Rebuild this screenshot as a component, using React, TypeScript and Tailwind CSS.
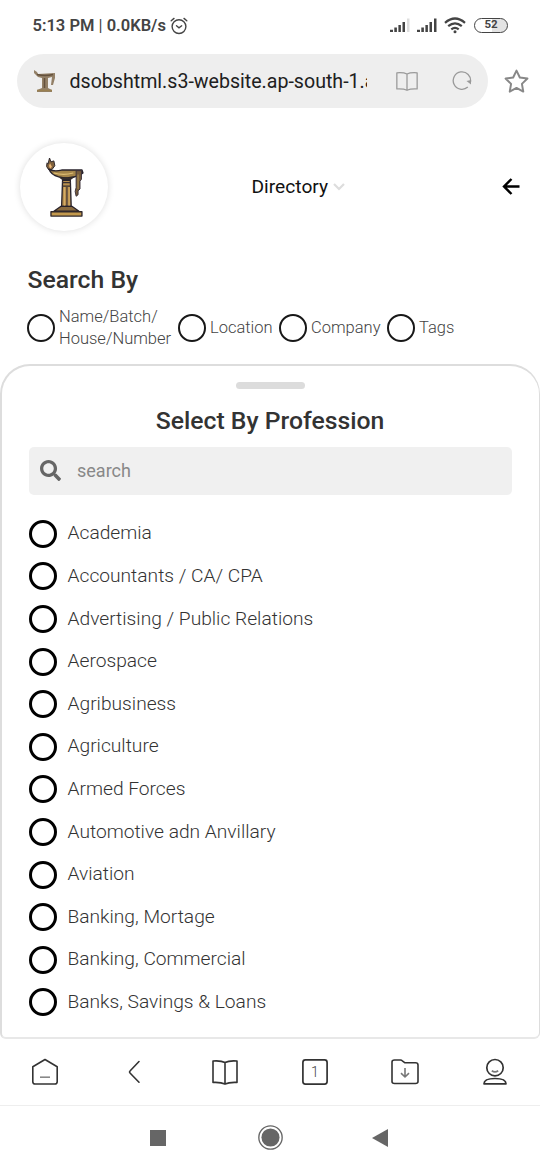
import type { ReactNode } from "react";
import { FaSearch } from "react-icons/fa";

const professions = [
  "Academia",
  "Accountants / CA/ CPA",
  "Advertising / Public Relations",
  "Aerospace",
  "Agribusiness",
  "Agriculture",
  "Armed Forces",
  "Automotive adn Anvillary",
  "Aviation",
  "Banking, Mortage",
  "Banking, Commercial",
  "Banks, Savings & Loans",
];

function AlarmIcon() {
  return (
    <svg width="18" height="18" viewBox="0 0 18 18" fill="none" stroke="#444" strokeWidth="1.4" strokeLinecap="round">
      <circle cx="9" cy="9.6" r="6.9" />
      <path d="M1.2 3.8 4 1.4M16.8 3.8 14 1.4M6.5 8.8 9 10.8l2.7-2" />
    </svg>
  );
}

function Signal({ full }: { full: boolean }) {
  return (
    <svg width="20" height="16" viewBox="0 0 20 16" fill="#444">
      <path d="M0 12.8h3V15H0zM4.3 10.5h2.6V15H4.3zM8.4 8h2.5v7H8.400zM12.5 5H15v10h-2.500z" />
      <path d="M17 1.500h2.500V15H17z" fill={full ? "#444" : "#dedede"} />
    </svg>
  );
}

function WifiIcon() {
  return (
    <svg width="22" height="17" viewBox="0 0 22 17" fill="none" stroke="#444" strokeWidth="2.200">
      <path d="M1 5.800Q11-2.800 21 5.800M4.200 9.200q6.800-5.800 13.600 0M7.300 12.300q3.700-3 7.400 0" />
      <circle cx="11" cy="14.800" r="1.500" fill="#444" stroke="none" />
    </svg>
  );
}

function BookIcon({ width, height, color, stroke }: { width: number; height: number; color: string; stroke: number }) {
  return (
    <svg width={width} height={height} viewBox="0 0 26 24" preserveAspectRatio="none" fill="none" stroke={color} strokeWidth={stroke} strokeLinejoin="round">
      <path d="M13 2.500Q9 .4 1 1v20.500q8-.4 12 1.600 4-2 12-1.600V1Q17 .4 13 2.500zM13 2.500v20.500" />
    </svg>
  );
}

function LampLogo() {
  return (
    <svg width="40" height="60" viewBox="0 0 41 62" strokeLinejoin="round">
      <path d="M4 12.500Q0 9 2 5l1 1L4.500 0 6 4l3-1 1 5-3 4z" fill="#80623d" stroke="#29242a" strokeWidth="1" />
      <path d="M5 5.500 7 9l-2 2-1-3z" fill="#eeb776" />
      <path d="M4 11.500q5 3 13 1h21l1 3-3 2q-10 5-22 2Q6 17.500 4 11.500z" fill="#a58549" stroke="#27222b" strokeWidth="1.500" />
      <path d="M9 15.500q10 3 20 0" fill="none" stroke="#ddbd74" strokeWidth="1.300" />
      <path d="M32 13h5.500v9l-1.500 2v8l-2 2v4l-2 1.500-1-5 1-4z" fill="#755b3c" stroke="#3c323b" strokeWidth="1" />
      <path d="M34 17v15" stroke="#ae9051" strokeWidth="1.100" />
      <path d="M14 20h16l-4 3H18z" fill="#352d2b" />
      <path d="M18 23h8l.9 27H17z" fill="#b9904f" stroke="#29242c" strokeWidth="1.400" />
      <path d="M17.500 25.500h9M17.500 29h9M22.500 30v21" stroke="#393033" strokeWidth="1.200" />
      <path d="M20 30v20M24.800 30v20" stroke="#ddb66d" strokeWidth=".8" />
      <path d="M16 50h12l7 5H9z" fill="#8a6b3f" stroke="#28222a" strokeWidth="1.300" />
      <path d="M6 55.500h32v4.500H6z" fill="#c3994d" stroke="#30282b" strokeWidth="1.400" />
    </svg>
  );
}

function LampFavicon() {
  return (
    <svg width="24" height="24" viewBox="0 0 24 24">
      <path d="M1 1l3 2 1 2 17-1v5l-2 7h-2l1-8-4 1v10l4 2v2H4v-2l5-2V9L5 8 1 4z" fill="#938067" />
      <path d="M4 5.500q8 2 16 0M11.500 9v10" fill="none" stroke="#64513d" strokeWidth="1.500" />
      <path d="M4 21.500h15" stroke="#9a8051" strokeWidth="1.500" />
    </svg>
  );
}

function Filter({ width, children }: { width: string; children: ReactNode }) {
  return (
    <label className={"flex shrink-0 items-center gap-[4px] text-[16.500px] leading-[22px] font-light text-[#444] " + width}>
      <span className="size-[28px] shrink-0 rounded-full border-2 border-[#181818]" />
      <span className="whitespace-nowrap">{children}</span>
    </label>
  );
}

export default function App() {
  return (
    <div className="flex h-[1170px] w-[540px] flex-col overflow-hidden bg-white font-['Roboto',sans-serif]">
      <header className="flex h-[54px] shrink-0 items-start justify-between pt-[15px] pr-[32px] pl-[32.500px] text-[#444]">
        <div className="flex h-[20px] items-center gap-[4px] pt-px text-[16.500px] font-semibold">
          <span className="pt-px whitespace-nowrap">5:13 PM <span className="font-normal">|</span> 0.0KB/s</span>
          <AlarmIcon />
        </div>
        <div className="flex h-[20px] items-center gap-[7px]">
          <Signal full={false} />
          <Signal full />
          <WifiIcon />
          <span className="ml-px flex h-[15px] w-[34px] items-center justify-center rounded-full border-[1.500px] border-[#444] bg-[linear-gradient(90deg,white_52%,#e3e3e3_52%)] text-[11.500px] font-bold">52</span>
        </div>
      </header>

      <div className="flex h-[54px] shrink-0 items-center pl-[17px]">
        <div className="flex h-[54px] w-[471px] items-center rounded-full bg-[#eee] pl-[16px]">
          <LampFavicon />
          <span className="mt-[2px] ml-[12.500px] w-[297.500px] overflow-hidden text-[19.600px] whitespace-nowrap text-[#202020]">dsobshtml.s3-website.ap-south-1.a</span>
          <span className="ml-[29px]"><BookIcon width={22} height={19} color="#999" stroke={1.5} /></span>
          <svg className="ml-[34px]" width="20" height="20" viewBox="0 0 20 20" fill="none" stroke="#999" strokeWidth="1.300">
            <path d="M15.800 16A8.700 8.700 0 1 1 18.500 11" />
            <path d="m14.500 10 4.500-1v4.500z" fill="#999" stroke="none" />
          </svg>
        </div>
        <svg className="ml-[16px]" width="25" height="25" viewBox="0 0 24 24" fill="none" stroke="#888" strokeWidth="1.900" strokeLinejoin="round">
          <path d="m12 1.500 3.200 6.700 7.300 1-5.300 5.100 1.300 7.400-6.500-3.500-6.500 3.500 1.300-7.400-5.300-5.100 7.300-1z" />
        </svg>
      </div>

      <div className="flex h-[158px] shrink-0 items-center pl-[20px]">
        <div className="flex size-[88px] items-center justify-center rounded-full bg-white pl-[2px] pt-[2px] shadow-[0_0_7px_#dedede]"><LampLogo /></div>
        <div className="ml-[143.500px] flex items-center gap-[5px] text-[19.200px] text-[#111]">
          <span>Directory</span>
          <svg width="12" height="8" viewBox="0 0 12 8" fill="none" stroke="#ddd" strokeWidth="2.200"><path d="m1 1 5 5 5-5" /></svg>
        </div>
        <svg className="ml-[157px]" width="18" height="18" viewBox="0 0 18 18" fill="none" stroke="#000" strokeWidth="2.400">
          <path d="M17.500 8.500H2M9.500 1 2 8.500l7.500 7.500" />
        </svg>
      </div>

      <section className="h-[98px] shrink-0 pl-[27px]">
        <h1 className="pl-[0.500px] text-[24.750px] leading-[28px] font-medium text-[#333]">Search By</h1>
        <div className="mt-[12px] flex h-[44px] items-center">
          <Filter width="w-[151px]">Name/Batch/<br />House/Number</Filter>
          <Filter width="w-[101px]">Location</Filter>
          <Filter width="w-[108px]">Company</Filter>
          <Filter width="w-[70px]">Tags</Filter>
        </div>
      </section>

      <main className="flex h-[675px] shrink-0 flex-col rounded-t-[30px] rounded-b-[6px] border-2 border-r border-[#ddd] border-b-[#e8e8e8] pl-[26.500px]">
        <div className="mt-[16px] ml-[207.500px] h-[7px] w-[69px] shrink-0 rounded-full bg-[#dcdcdc]" />
        <h2 className="mt-[17px] h-[30px] w-[483px] shrink-0 text-center text-[24.750px] leading-[30px] font-medium text-[#333]">Select By Profession</h2>
        <label className="mt-[11px] flex h-[48px] w-[483px] shrink-0 items-center rounded-[5px] bg-[#f0f0f0] pl-[11.500px] text-[#666]">
          <FaSearch size={21} className="-mt-[2px]" />
          <input className="-mt-[2px] ml-[16px] w-[300px] bg-transparent text-[18px] outline-none placeholder:text-[#888]" placeholder="search" />
        </label>
        <ul className="mt-[17.500px]">
          {professions.map((name) => (
            <li key={name} className="flex h-[42.600px] items-center gap-[11px] text-[19.200px] font-light text-[#333]">
              <span className="size-[28px] shrink-0 rounded-full border-[3px] border-black" />
              <span className="whitespace-nowrap">{name}</span>
            </li>
          ))}
        </ul>
      </main>

      <nav className="grid h-[67px] shrink-0 grid-cols-6 place-items-center border-b border-[#eee] text-[#333]">
        <svg width="28" height="28" viewBox="0 0 28 28" fill="none" stroke="currentColor" strokeWidth="1.600" strokeLinejoin="round">
          <path d="M1.800 8.700 14 1.500l12.200 7.200v15q0 2.300-2.500 2.300H4.300q-2.500 0-2.500-2.300z" />
          <path d="M9 19.200h10" stroke="#888" />
        </svg>
        <svg width="28" height="28" viewBox="0 0 28 28" fill="none" stroke="currentColor" strokeWidth="1.600" strokeLinecap="round"><path d="M18 3.500 9 13q-1 1 0 2l9 9.200" /></svg>
        <BookIcon width={26} height={25} color="#333" stroke={1.6} />
        <svg width="26" height="26" viewBox="0 0 26 26" fill="none" stroke="currentColor" strokeWidth="1.700">
          <rect x=".9" y=".9" width="24.200" height="24.200" rx="2.500" />
          <text x="13" y="17.800" textAnchor="middle" fontSize="14" fontWeight="300" fill="#444" stroke="none">1</text>
        </svg>
        <svg width="28" height="28" viewBox="0 0 28 28" fill="none" stroke="currentColor" strokeWidth="1.600" strokeLinejoin="round">
          <path d="M3.500 2h6q1 0 1.800.8L14 4.800h10.500q2.500 0 2.500 2.200v16.500q0 2-2.500 2h-21q-2.500 0-2.500-2V4q0-2 2.500-2z" />
          <path d="M14 10V19m-4-3.800 4 3.800 4-3.800" stroke="#777" />
        </svg>
        <svg width="28" height="28" viewBox="0 0 28 28" fill="none" stroke="currentColor" strokeWidth="1.700">
          <circle cx="14" cy="9.700" r="8.200" /><path d="M3 25.800q0-5.300 11-5.300t11 5.300z" strokeLinejoin="round" /><path d="M10.800 12.800q3.200 2.300 6.400 0" stroke="#777" />
        </svg>
      </nav>
      <footer className="flex h-[63px] shrink-0 items-center pl-[150px]">
        <span className="size-[16px] bg-[#666]" />
        <svg className="ml-[92px]" width="25" height="25" viewBox="0 0 24 24"><circle cx="12" cy="12" r="11.200" fill="none" stroke="#666" strokeWidth="1.300" /><circle cx="12" cy="12" r="8.700" fill="#666" /></svg>
        <svg className="ml-[89px]" width="16" height="18" viewBox="0 0 16 18" fill="#666"><path d="M16 0v18L0 9z" /></svg>
      </footer>
    </div>
  );
}
